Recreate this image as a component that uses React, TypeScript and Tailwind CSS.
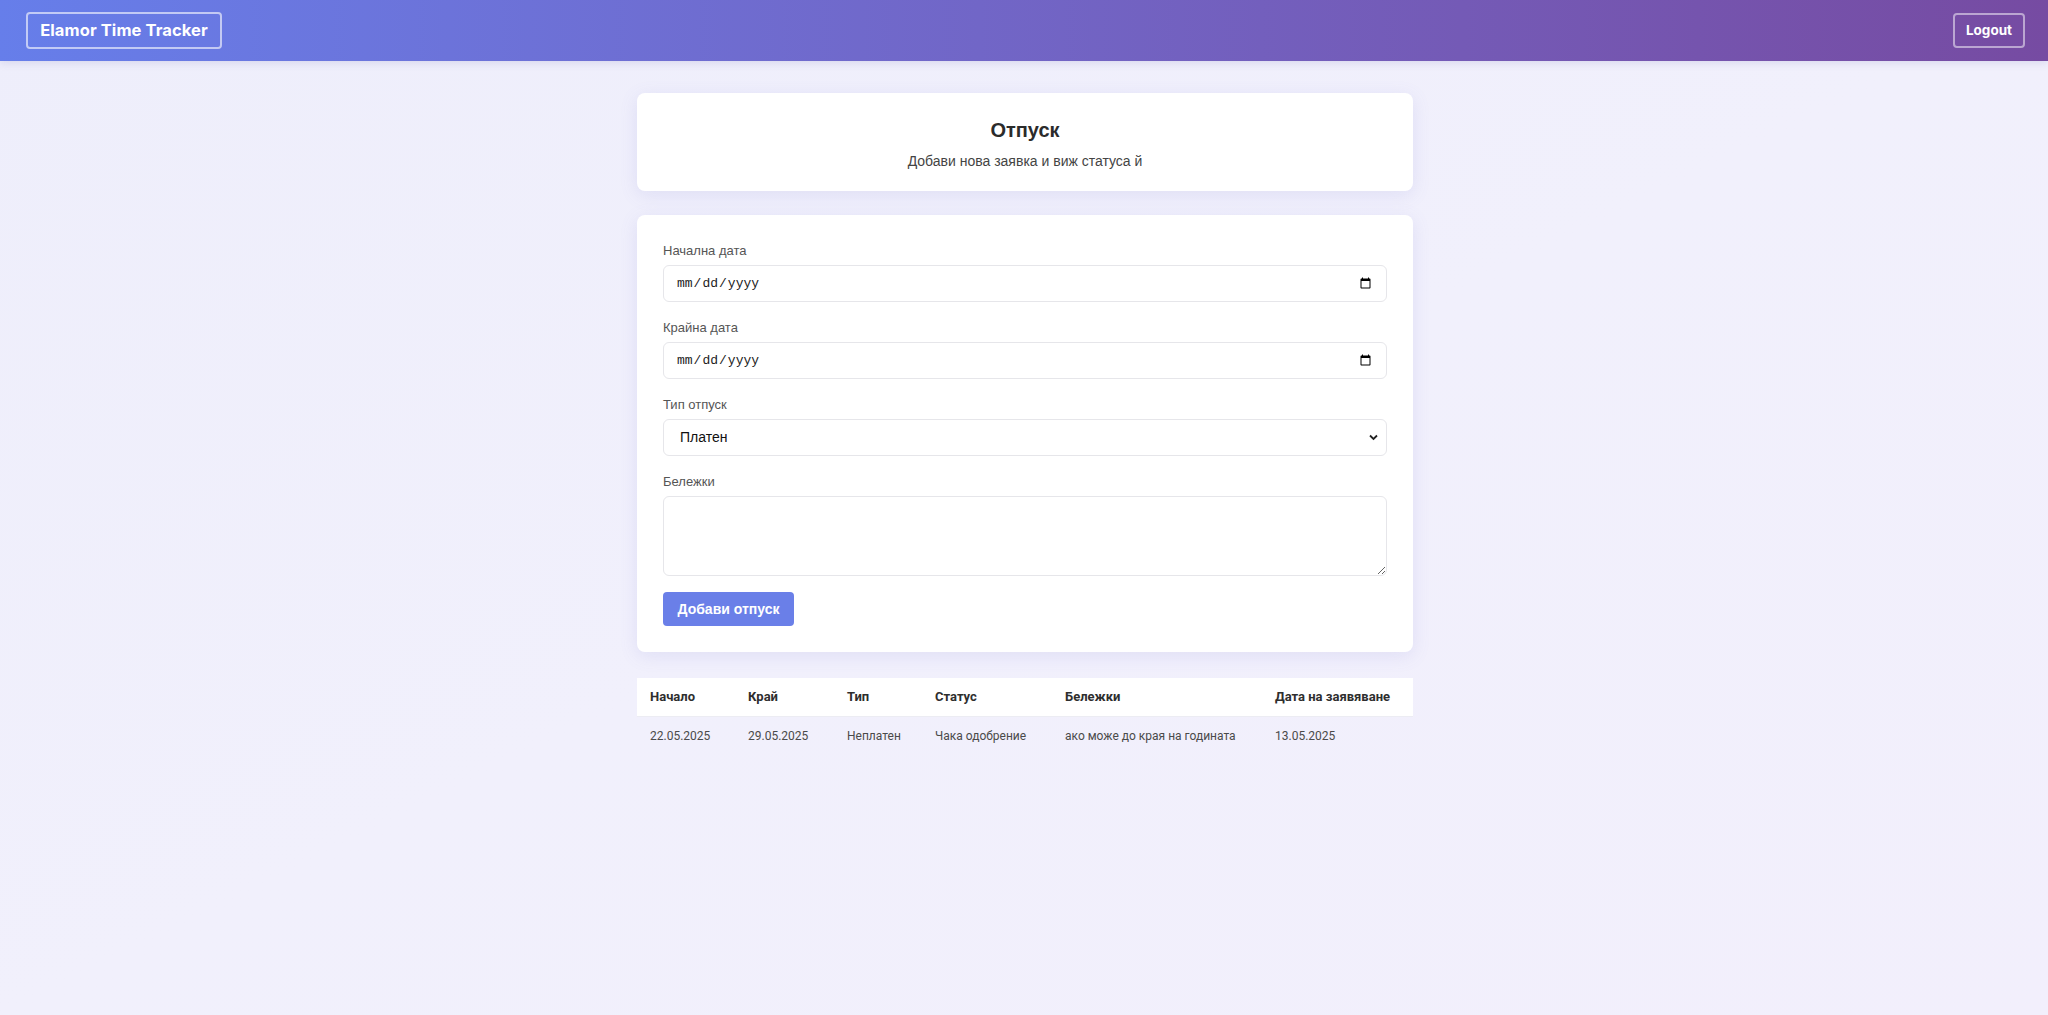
import React from "react";

export default function App() {
  const rows = [
    {
      start: "22.05.2025",
      end: "29.05.2025",
      type: "Неплатен",
      status: "Чака одобрение",
      notes: "ако може до края на годината",
      date: "13.05.2025",
    },
  ];
  return (
    <div
      className="min-h-[1015px] w-full bg-gradient-to-br from-[#eeeefb] via-[#f1f0fc] to-[#f2effc]"
      style={{ fontFamily: '"Liberation Sans", Arial, sans-serif' }}
    >
      <header className="h-[61px] flex items-center justify-between pl-[26px] pr-[23px] bg-gradient-to-r from-[#667eea] to-[#764ba2] shadow-[0_2px_8px_rgba(80,80,160,0.15)]">
        <div
          className="w-[196px] h-[37px] flex items-center justify-center border-2 border-white/60 rounded-[4px] text-white font-bold text-[16.5px] tracking-[0.1px]"
          style={{ fontFamily: 'Inter, "Open Sans", sans-serif' }}
        >
          Elamor Time Tracker
        </div>
        <button
          className="w-[72px] h-[35px] flex items-center justify-center border-2 border-white/50 rounded-[4px] text-white font-bold text-[13.5px]"
          style={{ fontFamily: 'Inter, "Open Sans", sans-serif' }}
        >
          Logout
        </button>
      </header>

      <main className="w-[778px] mx-auto pl-[2px] pt-[32px]">
        <section className="bg-white rounded-[8px] shadow-[0_4px_18px_rgba(110,110,200,0.13)] pt-[25px] pb-[20px] text-center">
          <h2 className="text-[20px] leading-[24px] font-bold text-[#2b2b2b]">Отпуск</h2>
          <p className="mt-[9px] text-[14px] leading-[20px] text-[#444]">
            Добави нова заявка и виж статуса й
          </p>
        </section>

        <section className="mt-[24px] bg-white rounded-[8px] shadow-[0_4px_18px_rgba(110,110,200,0.13)] px-[26px] pt-[28px] pb-[26px]">
          <div className="mb-[18px]">
            <label className="block text-[13px] leading-[16px] mb-[6px] text-[#555]">Начална дата</label>
            <input
              type="date"
              className="w-full h-[37px] border border-[#e6e6ea] rounded-[6px] px-[12px] text-[13px] text-[#222] bg-white"
              style={{ fontFamily: '"Liberation Mono", monospace' }}
            />
          </div>
          <div className="mb-[18px]">
            <label className="block text-[13px] leading-[16px] mb-[6px] text-[#555]">Крайна дата</label>
            <input
              type="date"
              className="w-full h-[37px] border border-[#e6e6ea] rounded-[6px] px-[12px] text-[13px] text-[#222] bg-white"
              style={{ fontFamily: '"Liberation Mono", monospace' }}
            />
          </div>
          <div className="mb-[18px]">
            <label className="block text-[13px] leading-[16px] mb-[6px] text-[#555]">Тип отпуск</label>
            <div className="relative">
              <select className="w-full h-[37px] border border-[#e6e6ea] rounded-[6px] pl-[16px] pr-[30px] text-[14px] text-[#111] bg-white appearance-none">
                <option>Платен</option>
                <option>Неплатен</option>
              </select>
              <svg
                className="absolute right-[9px] top-[15px] pointer-events-none"
                width="9"
                height="7"
                viewBox="0 0 9 7"
              >
                <path d="M1 1.5 L4.5 5 L8 1.5" fill="none" stroke="#222" strokeWidth="1.8" />
              </svg>
            </div>
          </div>
          <div className="mb-[16px]">
            <label className="block text-[13px] leading-[16px] mb-[6px] text-[#555]">Бележки</label>
            <textarea className="block w-full h-[80px] border border-[#e6e6ea] rounded-[6px] px-[12px] py-[8px] text-[14px] bg-white" />
          </div>
          <button className="w-[131px] h-[34px] rounded-[4px] bg-[#6a7fe8] text-white font-bold text-[14px]">
            Добави отпуск
          </button>
        </section>

        <table
          className="mt-[26px] w-full border-collapse text-left"
          style={{ fontFamily: 'Roboto, "Open Sans", sans-serif' }}
        >
          <thead>
            <tr className="bg-white h-[38px] border-b border-[#ececf3]">
              <th className="w-[98px] pl-[13px] text-[13px] font-bold text-[#2e2e2e]">Начало</th>
              <th className="w-[99px] pl-[13px] text-[13px] font-bold text-[#2e2e2e]">Край</th>
              <th className="w-[88px] pl-[13px] text-[13px] font-bold text-[#2e2e2e]">Тип</th>
              <th className="w-[130px] pl-[13px] text-[13px] font-bold text-[#2e2e2e]">Статус</th>
              <th className="w-[210px] pl-[13px] text-[13px] font-bold text-[#2e2e2e]">Бележки</th>
              <th className="pl-[13px] text-[13px] font-bold text-[#2e2e2e]">Дата на заявяване</th>
            </tr>
          </thead>
          <tbody>
            {rows.map((r, i) => (
              <tr key={i} className="h-[40px]">
                <td className="pl-[13px] text-[12px] text-[#4a4a4a]">{r.start}</td>
                <td className="pl-[13px] text-[12px] text-[#4a4a4a]">{r.end}</td>
                <td className="pl-[13px] text-[12px] text-[#4a4a4a]">{r.type}</td>
                <td className="pl-[13px] text-[12px] text-[#4a4a4a]">{r.status}</td>
                <td className="pl-[13px] text-[12px] text-[#4a4a4a]">{r.notes}</td>
                <td className="pl-[13px] text-[12px] text-[#4a4a4a]">{r.date}</td>
              </tr>
            ))}
          </tbody>
        </table>
      </main>
    </div>
  );
}
